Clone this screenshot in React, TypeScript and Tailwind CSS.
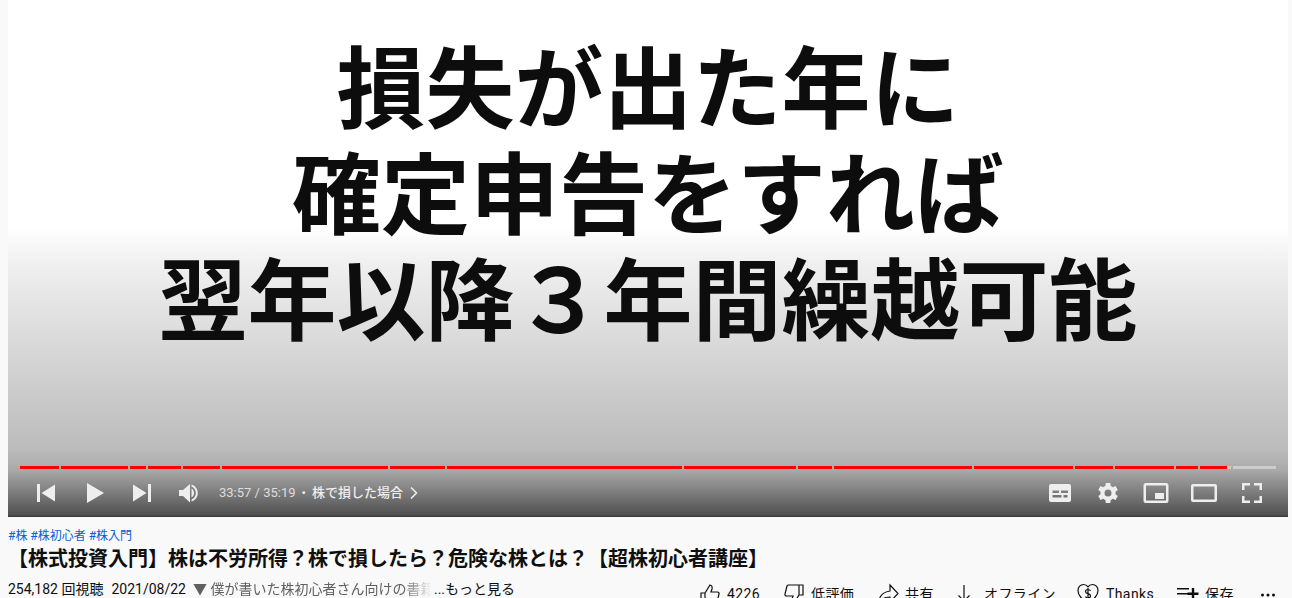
import { ChevronRight } from "lucide-react";

const chapters = [
  39, 67, 16, 33, 37, 166, 55, 235, 112, 34, 138, 99, 38, 59, 22, 27,
];

const Icon = ({ d }: { d: string }) => (
  <div className="flex w-12 justify-center">
    <svg viewBox="0 0 36 36" className="h-9 w-9 shrink-0" fill="#eee">
      <path d={d} fillRule="evenodd" />
    </svg>
  </div>
);

const Action = ({ icon, label, className }: { icon: React.ReactNode; label: string; className: string }) => (
  <div className={`flex shrink-0 items-center ${className}`}>
    {icon}
    <span className="text-sm tracking-[0.4px] text-[#0f0f0f]">{label}</span>
  </div>
);

const stroke = { fill: "none", stroke: "#0f0f0f", strokeWidth: 1.2 };

export default function App() {
  return (
    <div className="h-[598px] w-[1292px] overflow-hidden bg-[#f9f9f9] pl-2 pr-1 font-['Roboto','Noto_Sans_CJK_JP',sans-serif]">
      {/* Player */}
      <div className="flex h-[517px] w-[1280px] flex-col bg-[linear-gradient(#fff_0,#fff_228px,#f0f0f0_262px,#bbb_450px,#a9a9a9_470px,#505050_515px,#333_517px)]">
        <div className="flex h-[459px] flex-col items-center pt-[30px] font-['Noto_Sans_CJK_JP',sans-serif] text-[89px] leading-[106px] font-bold text-[#0d0d0d]">
          <div>損失が出た年に</div>
          <div>確定申告をすれば</div>
          <div>翌年以降３年間繰越可能</div>
        </div>

        {/* Progress */}
        <div className="mx-3 mt-[7px] flex h-[3px]">
          {chapters.map((w, i) => (
            <div
              key={i}
              className={`h-full shrink-0 bg-[#f00] ${i === chapters.length - 1 ? "" : "mr-0.5"}`}
              style={{ width: w }}
            />
          ))}
          <div className="mr-0.5 h-full w-[4px] shrink-0 bg-[#ccc]" />
          <div className="h-full w-[43px] shrink-0 bg-[#ccc]" />
        </div>

        {/* Controls */}
        <div className="mt-[6px] flex h-9 items-center pl-[20px] pr-3">
          <svg viewBox="0 0 36 36" className="h-9 w-9 shrink-0" fill="#eee">
            <path d="M9 9h3v18H9zM13.500 18 27 9.500v17z" />
          </svg>
          <svg viewBox="0 0 36 36" className="ml-[14px] h-9 w-9 shrink-0" fill="#eee">
            <path d="M9 8 26 18 9 28z" />
          </svg>
          <svg viewBox="0 0 36 36" className="ml-[10px] h-9 w-9 shrink-0" fill="#eee">
            <path d="M9 9.500 22.500 18 9 26.500zM24 9h3v18h-3z" />
          </svg>
          <svg viewBox="0 0 36 36" className="ml-[10px] h-9 w-9 shrink-0" fill="#eee">
            <path d="M9 15v6h4l7 6.500V9l-7 6z" />
            <path d="M21.500 13.500v9c1.500-.8 2.500-2.600 2.500-4.500s-1-3.700-2.500-4.500z" />
            <path d="M21.500 9.500v2c2.500 1 4.300 3.500 4.300 6.500s-1.800 5.500-4.300 6.500v2c3.600-1 6.300-4.500 6.300-8.500s-2.700-7.500-6.300-8.500z" />
          </svg>
          <span className="ml-[13px] text-[13px] text-[#ddd]">33:57 / 35:19</span>
          <span className="ml-[6px] text-[13px] text-[#eee]">•</span>
          <span className="ml-[6px] text-[13px] font-medium text-[#eee]">株で損した場合</span>
          <ChevronRight className="ml-px h-5 w-5 text-[#eee]" strokeWidth={2} />

          <div className="ml-auto flex items-center">
            <Icon d="M9 9h18a2 2 0 0 1 2 2v14a2 2 0 0 1-2 2H9a2 2 0 0 1-2-2V11a2 2 0 0 1 2-2zm1.500 9H17v-2.500h-6.500zm8.500 0h7v-2.500h-7zm-8.500 4.500h9V20h-9zm11 0h4V20h-4z" />
            <Icon d="M25.500 19.300c.1-.4.1-.9.1-1.300s0-.9-.1-1.300l2.300-1.800-2.200-3.800-2.700 1.100c-.7-.5-1.400-1-2.200-1.300L20.300 8h-4.500l-.4 2.900c-.8.300-1.500.8-2.200 1.300l-2.700-1.100-2.200 3.800 2.300 1.800c-.1.400-.1.900-.1 1.300s0 .9.100 1.300l-2.300 1.800 2.200 3.800 2.700-1.100c.7.500 1.400 1 2.200 1.300l.4 2.900h4.500l.4-2.900c.8-.3 1.500-.8 2.200-1.300l2.700 1.100 2.200-3.800zM18 21.500a3.500 3.500 0 1 1 0-7 3.500 3.500 0 0 1 0 7z" />
            <Icon d="M8 8h20a2.500 2.500 0 0 1 2.500 2.500v15A2.500 2.500 0 0 1 28 28H8a2.500 2.500 0 0 1-2.500-2.500v-15A2.500 2.500 0 0 1 8 8zm0 2.500v15h20v-15zM17 18h9v6h-9z" />
            <Icon d="M7 9h22a2 2 0 0 1 2 2v14a2 2 0 0 1-2 2H7a2 2 0 0 1-2-2V11a2 2 0 0 1 2-2zm.500 2.500v13h21v-13z" />
            <Icon d="M8 8h8v2.500h-5.500V15H8zM20 8h8v7h-2.500v-4.500H20zM8 21h2.500v4.500H16V28H8zM25.500 21H28v7h-8v-2.500h5.500z" />
          </div>
        </div>
      </div>

      {/* Below the player */}
      <div className="pt-[11px] text-[#0f0f0f]">
        <div className="h-[16px] text-xs leading-4 text-[#065fd4]">#株 #株初心者 #株入門</div>
        <div className="mt-[2px] h-[26px] text-[20px] leading-[26px] font-bold whitespace-nowrap">
          【株式投資入門】株は不労所得？株で損したら？危険な株とは？【超株初心者講座】
        </div>
        <div className="mt-[7px] flex items-start">
          <div className="flex text-sm leading-5 whitespace-nowrap">
            <span>254,182 回視聴</span>
            <span className="ml-2">2021/08/22</span>
            <span className="ml-[7px] w-[239px] overflow-hidden text-[#606060] [mask-image:linear-gradient(to_right,#000_88%,transparent)]">▼ 僕が書いた株初心者さん向けの書籍</span>
            <span className="ml-[2px]">...もっと見る</span>
          </div>

          <div className="ml-auto mt-[3px] flex h-6 items-center pr-2">
            <Action
              className="w-[84px] gap-[5px]"
              label="4226"
              icon={
                <svg viewBox="0 0 24 24" className="h-6 w-6 shrink-0" style={stroke}>
                  <path d="M3 11h4v10H3zM7 11l5-8c2 .5 2.500 2 2 4l-1 3h6.500c1 0 1.800 1 1.500 2l-2 8c-.2.600-.8 1-1.500 1H7" />
                </svg>
              }
            />
            <Action
              className="w-[94px] gap-[5px]"
              label="低評価"
              icon={
                <svg viewBox="0 0 24 24" className="h-6 w-6 shrink-0" style={stroke}>
                  <path d="M17 13h4V3h-4zM17 13l-5 8c-2-.5-2.500-2-2-4l1-3H4.500c-1 0-1.800-1-1.500-2l2-8c.2-.6.800-1 1.500-1H17" />
                </svg>
              }
            />
            <Action
              className="w-[76px] gap-[5px]"
              label="共有"
              icon={
                <svg viewBox="0 0 24 24" className="h-6 w-6 shrink-0" style={stroke}>
                  <path d="M14 3l8 8.500-8 8.500v-5C9 15 5 16.500 2.500 21c.5-6 4-11 11.500-12z" />
                </svg>
              }
            />
            <Action
              className="w-[124px] gap-2"
              label="オフライン"
              icon={
                <svg viewBox="0 0 24 24" className="h-6 w-6 shrink-0" style={stroke}>
                  <path d="M12 3v16M6.500 13.500 12 19l5.500-5.500" />
                </svg>
              }
            />
            <Action
              className="w-[99px] gap-[6px]"
              label="Thanks"
              icon={
                <svg viewBox="0 0 24 24" className="h-6 w-6 shrink-0" style={stroke}>
                  <path d="M12 22C6 17 2 13.500 2 8.500 2 5 4.500 2.500 7.500 2.500c1.800 0 3.500.9 4.500 2.300 1-1.400 2.700-2.300 4.500-2.300 3 0 5.500 2.500 5.500 6 0 5-4 8.500-10 13.500z" />
                  <path d="M14.500 9c-.5-1-1.500-1.500-2.500-1.500-1.400 0-2.500.8-2.500 2s1 1.800 2.500 2.200 2.500 1 2.500 2.200-1.100 2-2.500 2c-1 0-2-.5-2.500-1.500M12 6v12" />
                </svg>
              }
            />
            <Action
              className="w-[81px] gap-[6px]"
              label="保存"
              icon={
                <svg viewBox="0 0 24 24" className="h-6 w-6 shrink-0" fill="#0f0f0f">
                  <path d="M2 6h12v1.500H2zM2 11h12v1.500H2zM2 16h8v1.500H2zM16.800 10.500V6h2.400v4.500H23.500v2.400h-4.300v4.600h-2.400v-4.600H12.500v-2.400z" />
                </svg>
              }
            />
            <svg viewBox="0 0 24 24" className="h-6 w-6 shrink-0" fill="#0f0f0f">
              <circle cx="6.500" cy="13" r="1.500" />
              <circle cx="12" cy="13" r="1.500" />
              <circle cx="17.500" cy="13" r="1.500" />
            </svg>
          </div>
        </div>
      </div>
    </div>
  );
}
